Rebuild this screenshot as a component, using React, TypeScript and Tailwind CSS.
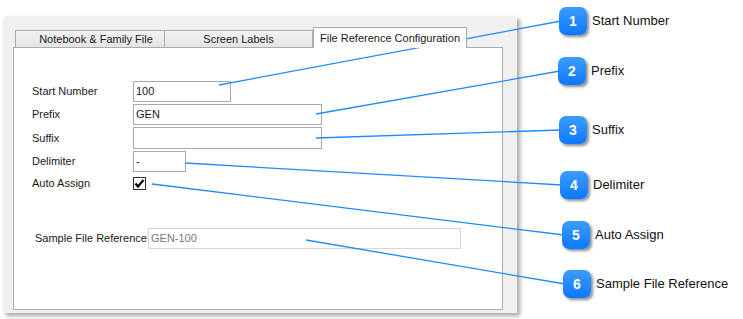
import React from "react"

// Callout data: bubble position, label and the point it connects to
const callouts = [
  { n: 1, x: 559, y: 7, label: "Start Number", tx: 592, from: [219, 85] },
  { n: 2, x: 558, y: 57, label: "Prefix", tx: 591, from: [316, 114] },
  { n: 3, x: 559, y: 116, label: "Suffix", tx: 592, from: [316, 138] },
  { n: 4, x: 560, y: 171, label: "Delimiter", tx: 593, from: [185, 163] },
  { n: 5, x: 562, y: 221, label: "Auto Assign", tx: 595, from: [152, 184] },
  { n: 6, x: 563, y: 270, label: "Sample File Reference", tx: 596, from: [306, 240] },
]

const Field = ({ value, className }: { value?: string; className: string }) => (
  <div
    className={`h-[21px] border border-[#a9a9a9] bg-white px-[2px] text-[11px] leading-[19px] text-[#1a1a1a] ${className}`}
  >
    {value}
  </div>
)

const Row = ({ label, children }: { label: string; children: React.ReactNode }) => (
  <div className="flex items-center">
    <span className="w-[101px] text-[11px] text-[#1a1a1a]">{label}</span>
    {children}
  </div>
)

export default function App() {
  return (
    <div className="relative h-[319px] w-[743px] overflow-hidden bg-white font-['Liberation_Sans',Arial,sans-serif]">
      {/* Dialog window */}
      <div className="ml-[3px] mt-[16px] flex h-[297px] w-[514px] flex-col rounded-tl-[5px] bg-[#f0f0f0] pl-[10px] pr-[14px] pb-[3px] pt-[11px] shadow-[3px_3px_4px_rgba(0,0,0,0.35)]">
        {/* Tabs */}
        <div className="flex items-end pl-[2px]">
          <div className="flex h-[17px] w-[150px] items-center justify-center border border-b-0 border-[#acacac] bg-gradient-to-b from-[#f2f2f2] to-[#e4e4e4] pl-[12px] text-[11px] text-[#1a1a1a]">
            Notebook &amp; Family File
          </div>
          <div className="flex h-[17px] w-[148px] items-center justify-center border border-b-0 border-l-0 border-[#acacac] bg-gradient-to-b from-[#f2f2f2] to-[#e4e4e4] text-[11px] text-[#1a1a1a]">
            Screen Labels
          </div>
          <div className="relative z-10 -mb-px flex h-[21px] w-[154px] items-start justify-center border border-b-0 border-[#acacac] bg-white pt-[2px] text-[11px] text-[#1a1a1a]">
            File Reference Configuration
          </div>
        </div>

        {/* Tab content */}
        <div className="flex-1 border border-[#acacac] bg-white pl-[18px] pt-[33px]">
          <div className="flex flex-col gap-[2px]">
            <Row label="Start Number">
              <Field value="100" className="w-[98px]" />
            </Row>
            <Row label="Prefix">
              <Field value="GEN" className="w-[189px]" />
            </Row>
            <Row label="Suffix">
              <Field className="h-[22px] w-[189px]" />
            </Row>
            <Row label="Delimiter">
              <Field value="-" className="w-[53px]" />
            </Row>
          </div>
          <div className="mt-[3px] flex items-center">
            <span className="w-[101px] text-[11px] text-[#1a1a1a]">Auto Assign</span>
            <div className="flex h-[13px] w-[13px] items-center justify-center border border-[#333] bg-white">
              <svg width="11" height="11" viewBox="0 0 11 11">
                <path d="M1.5 5.5 L4 8.5 L9.5 2" fill="none" stroke="#000" strokeWidth="2.2" />
              </svg>
            </div>
          </div>
          <div className="ml-[3px] mt-[36px] flex items-center">
            <span className="w-[113px] text-[11px] text-[#1a1a1a]">Sample File Reference</span>
            <div className="h-[21px] w-[313px] border border-[#d6d6d6] bg-white px-[2px] text-[11px] leading-[19px] text-[#7a7a7a]">
              GEN-100
            </div>
          </div>
        </div>
      </div>

      {/* Callout lines */}
      <svg className="pointer-events-none absolute left-0 top-0" width="743" height="319">
        {callouts.map((c) => (
          <line
            key={c.n}
            x1={c.from[0]}
            y1={c.from[1]}
            x2={c.x + 2}
            y2={c.y + 14}
            stroke="#1f8bff"
            strokeWidth="1.3"
          />
        ))}
      </svg>

      {/* Callout bubbles */}
      {callouts.map((c) => (
        <React.Fragment key={c.n}>
          <div
            className="absolute flex h-[28px] w-[28px] items-center justify-center rounded-[7px] bg-gradient-to-b from-[#3b9cff] to-[#0a78ff] text-[14px] font-bold text-white shadow-[2px_2px_3px_rgba(0,0,0,0.45)]"
            style={{ left: c.x, top: c.y }}
          >
            {c.n}
          </div>
          <span
            className="absolute text-[13px] leading-[28px] text-[#111]"
            style={{ left: c.tx, top: c.y }}
          >
            {c.label}
          </span>
        </React.Fragment>
      ))}
    </div>
  )
}
